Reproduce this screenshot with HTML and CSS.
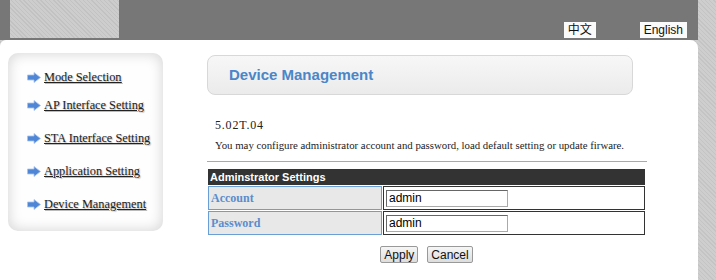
FILE: index.html
```html
<!DOCTYPE html>
<html lang="en">
<head>
    <meta charset="UTF-8">
    <title>Device Management</title>
    <link rel="stylesheet" href="styles.css">
</head>
<body>
    <div class="page">
        <div class="top-bar">
            <div class="logo"></div>
            <div class="lang">
                <span class="lang-btn">中文</span>
                <span class="lang-btn">English</span>
            </div>
        </div>
        <div class="main">
            <div class="nav">
                <a class="nav-item first" href="#"><svg class="arrow" viewBox="0 0 14 11"><polygon points="0.5,3 7,3 7,0.5 13.5,5.5 7,10.5 7,8 0.5,8"/></svg><span>Mode Selection</span></a>
                <a class="nav-item" href="#"><svg class="arrow" viewBox="0 0 14 11"><polygon points="0.5,3 7,3 7,0.5 13.5,5.5 7,10.5 7,8 0.5,8"/></svg><span>AP Interface Setting</span></a>
                <a class="nav-item" href="#"><svg class="arrow" viewBox="0 0 14 11"><polygon points="0.5,3 7,3 7,0.5 13.5,5.5 7,10.5 7,8 0.5,8"/></svg><span>STA Interface Setting</span></a>
                <a class="nav-item" href="#"><svg class="arrow" viewBox="0 0 14 11"><polygon points="0.5,3 7,3 7,0.5 13.5,5.5 7,10.5 7,8 0.5,8"/></svg><span>Application Setting</span></a>
                <a class="nav-item" href="#"><svg class="arrow" viewBox="0 0 14 11"><polygon points="0.5,3 7,3 7,0.5 13.5,5.5 7,10.5 7,8 0.5,8"/></svg><span>Device Management</span></a>
            </div>
            <div class="content">
                <div class="title-box">Device Management</div>
                <p class="version">5.02T.04</p>
                <p class="desc">You may configure administrator account and password, load default setting or update firware.</p>
                <hr>
                <table class="settings">
                    <tr><th colspan="2">Adminstrator Settings</th></tr>
                    <tr>
                        <td class="label">Account</td>
                        <td class="value"><input type="text" value="admin"></td>
                    </tr>
                    <tr>
                        <td class="label">Password</td>
                        <td class="value"><input type="text" value="admin"></td>
                    </tr>
                </table>
                <div class="buttons">
                    <button>Apply</button>
                    <button>Cancel</button>
                </div>
            </div>
        </div>
    </div>
</body>
</html>
```

FILE: styles.css
```css
body {
    margin: 0;
    font-family: "Liberation Serif", serif;
    background: repeating-linear-gradient(45deg, #c4c4c4 0px, #c4c4c4 1px, #cecece 1px, #cecece 3px);
    height: 280px;
    overflow: hidden;
}

.page {
    width: 698px;
}

.top-bar {
    height: 40px;
    background: #777777;
    display: flex;
    justify-content: space-between;
}

.logo {
    width: 109px;
    height: 38px;
    margin-left: 10px;
    background: repeating-linear-gradient(45deg, #c2c2c2 0px, #c2c2c2 1px, #cdcdcd 1px, #cdcdcd 3px);
}

.lang {
    display: flex;
    align-items: flex-end;
    gap: 44px;
    padding: 0 11px 2px 0;
}

.lang-btn {
    background: #fafafa;
    font-family: "Liberation Sans", "Noto Sans CJK SC", sans-serif;
    font-size: 12px;
    line-height: 16px;
    padding: 0 4px;
    color: #111;
}

.main {
    background: #fff;
    border-radius: 6px 8px 0 0;
    height: 240px;
    display: flex;
    padding: 13px 0 0 8px;
    box-sizing: border-box;
}

.nav {
    width: 155px;
    height: 178px;
    border-radius: 10px;
    background: #fefefe;
    box-shadow: inset 0 0 14px #d2d2d2;
    box-sizing: border-box;
    padding: 15px 0 0 19px;
    display: flex;
    flex-direction: column;
    gap: 15px;
}

.nav-item {
    display: flex;
    align-items: center;
    gap: 3px;
    color: #222;
    font-size: 12.3px;
    line-height: 18px;
    text-shadow: 1px 1px 1px #bbb;
}

.nav-item:nth-child(2) {
    margin-top: -5px;
}

.nav-item span {
    text-decoration: underline;
}

.arrow {
    width: 14px;
    height: 11px;
    fill: #4f86d6;
    stroke: #a8c4ee;
    stroke-width: 0.8;
}

.content {
    margin-left: 44px;
    width: 440px;
}

.title-box {
    margin-top: 2px;
    width: 426px;
    height: 40px;
    box-sizing: border-box;
    border: 1px solid #d8d8d8;
    border-radius: 8px;
    background: linear-gradient(#f7f7f7, #ebebeb);
    font-family: "Liberation Sans", sans-serif;
    font-weight: bold;
    font-size: 15px;
    color: #4a86c8;
    line-height: 38px;
    padding-left: 21px;
}

.version {
    margin: 22px 0 0 8px;
    font-size: 12px;
    line-height: 16px;
    letter-spacing: 0.8px;
    color: #222;
}

.desc {
    margin: 4px 0 0 8px;
    font-size: 10.8px;
    line-height: 16px;
    white-space: nowrap;
    color: #222;
}

hr {
    margin: 8px 0 0 0;
    border: none;
    border-top: 1px solid #aaa;
    width: 440px;
}

.settings {
    margin-top: 6px;
    width: 439px;
    border-collapse: separate;
    border-spacing: 1px;
}

.settings th {
    background: #333;
    color: #fff;
    font-family: "Liberation Sans", sans-serif;
    font-size: 11px;
    text-align: left;
    height: 16px;
    padding: 0 2px;
}

.settings .label {
    width: 168px;
    height: 22px;
    border: 1px solid #6a9fd6;
    background: #e8e8e8;
    color: #5b8ccc;
    font-weight: bold;
    font-size: 12px;
    padding: 0 2px;
}

.settings .value {
    border: 1px solid #333;
    padding: 0 0 0 2px;
}

.settings input {
    width: 122px;
    height: 17px;
    box-sizing: border-box;
    border: 1px solid #aaa;
    border-left-color: #666;
    border-top-color: #666;
    font-family: "Liberation Sans", sans-serif;
    font-size: 12px;
    padding: 0 2px;
    display: block;
}

.buttons {
    margin-top: 10px;
    width: 439px;
    display: flex;
    justify-content: center;
    gap: 9px;
}

.buttons button {
    font-family: "Liberation Sans", sans-serif;
    font-size: 12px;
    height: 17px;
    padding: 0 3px;
    border: 1px solid #999;
    border-radius: 2px;
    background: linear-gradient(#f6f6f6, #dddddd);
    color: #111;
}
```
